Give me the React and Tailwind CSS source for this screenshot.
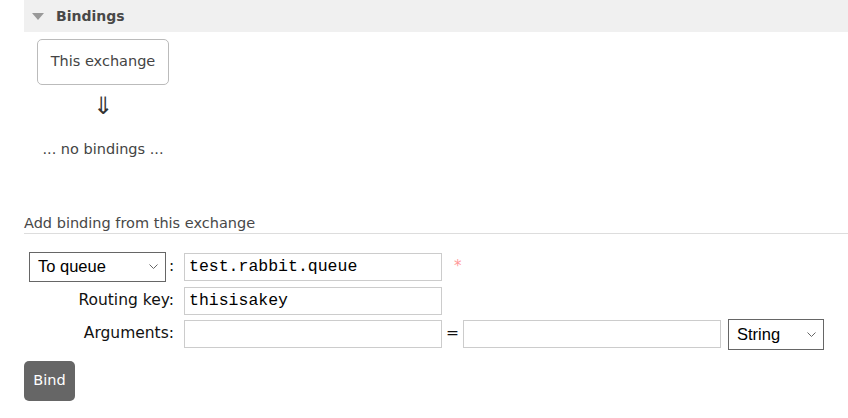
export default function App() {
  const verdana = { fontFamily: '"DejaVu Sans", Verdana, sans-serif' };
  const mono = { fontFamily: '"Liberation Mono", "Courier New", monospace' };
  const arial = { fontFamily: '"Liberation Sans", Arial, sans-serif' };
  return (
    <main className="min-h-screen w-[848px] bg-white text-[14.5px] text-[#333]" style={verdana}>
      <section className="pl-6">
        <div className="flex h-8 items-center gap-3 bg-[#f0f0f0] pl-2">
          <span className="h-0 w-0 border-x-[6px] border-t-[7px] border-x-transparent border-t-[#999]" />
          <h2 className="text-[14px] font-bold text-[#484848]">Bindings</h2>
        </div>

        <div className="flex w-[158px] flex-col items-center pt-[7px]">
          <div className="flex h-[46px] w-[132px] items-center justify-center rounded-[5px] border border-[#bbb] text-[#444]">
            This exchange
          </div>
          <div className="mt-[9px] text-[24px] leading-6 text-[#333]">⇓</div>
          <p className="mt-[21px] text-[#444]">... no bindings ...</p>
        </div>

        <h3 className="mt-[52px] border-b border-[#ddd] pb-0 leading-5 text-[#484848]">Add binding from this exchange</h3>

        <div className="mt-[18px] flex flex-col text-[15.5px] text-[#111]">
          <div className="flex h-[30px] items-start">
            <div className="flex w-[160px] items-center pl-[5px]">
              <div
                className="flex h-[30px] w-[137px] items-center justify-between border border-[#666] pl-2 pr-[7px] text-[16.5px] text-black"
                style={arial}
              >
                <span>To queue</span>
                <svg width="9" height="5" viewBox="0 0 9 5" fill="none" stroke="#666" strokeWidth="1">
                  <path d="M0.5 0.5l4 4 4-4" />
                </svg>
              </div>
              <span className="ml-[3px]">:</span>
            </div>
            <input
              readOnly
              value="test.rabbit.queue"
              className="mt-px h-[28px] w-[258px] border border-[#ccc] px-1 text-[16.5px] text-black outline-none"
              style={mono}
            />
            <span className="ml-[12px] mt-[6px] text-[15px] leading-4 text-[#f99]">*</span>
          </div>

          <div className="mt-[5px] flex h-[28px] items-center">
            <label className="w-[160px] pr-[10px] text-right">Routing key:</label>
            <input
              readOnly
              value="thisisakey"
              className="h-[28px] w-[258px] border border-[#ccc] px-1 text-[16.5px] text-black outline-none"
              style={mono}
            />
          </div>

          <div className="mt-[5px] flex h-[28px] items-start">
            <label className="flex h-[28px] w-[160px] items-center justify-end pr-[10px]">Arguments:</label>
            <input readOnly className="h-[28px] w-[258px] border border-[#ccc] outline-none" />
            <span className="mx-[4px] flex h-[28px] items-center">=</span>
            <input readOnly className="h-[28px] w-[258px] border border-[#ccc] outline-none" />
            <div
              className="-mt-px ml-[7px] flex h-[31px] w-[96px] shrink-0 items-center justify-between border border-[#666] pl-2 pr-[7px] text-[16.5px] text-black"
              style={arial}
            >
              <span>String</span>
              <svg width="9" height="5" viewBox="0 0 9 5" fill="none" stroke="#666" strokeWidth="1">
                <path d="M0.5 0.5l4 4 4-4" />
              </svg>
            </div>
          </div>
        </div>

        <button type="button" className="mt-[13px] h-10 w-[51px] rounded-[5px] bg-[#666] text-white">
          Bind
        </button>
      </section>
    </main>
  );
}
